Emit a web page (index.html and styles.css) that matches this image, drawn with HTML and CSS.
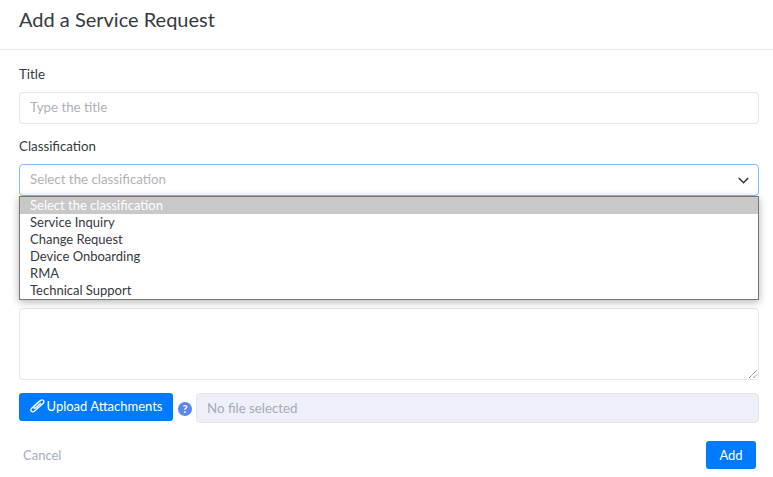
FILE: index.html
```html
<!DOCTYPE html>
<html lang="en">
<head>
<meta charset="utf-8">
<title>Add a Service Request</title>
<link rel="stylesheet" href="styles.css">
</head>
<body>
<div class="modal">
  <header class="modal-header"><h1 class="modal-title">Add a Service Request</h1></header>
  <form class="modal-body">
    <div class="field">
      <label class="label">Title</label>
      <div class="control placeholder"><span class="control-text">Type the title</span></div>
    </div>
    <div class="field select-field">
      <label class="label">Classification</label>
      <div class="control control-focus placeholder">
        <span class="control-text">Select the classification</span>
        <svg class="chevron" width="11" height="7" viewBox="0 0 11 7"><path d="M0.8 1 L5.5 5.7 L10.2 1" fill="none" stroke="#343a40" stroke-width="1.6"/></svg>
      </div>
      <ul class="dropdown">
        <li class="option option-active">Select the classification</li>
        <li class="option">Service Inquiry</li>
        <li class="option">Change Request</li>
        <li class="option">Device Onboarding</li>
        <li class="option">RMA</li>
        <li class="option">Technical Support</li>
      </ul>
    </div>
    <div class="field">
      <div class="control textarea">
        <svg class="grip" width="10" height="10" viewBox="0 0 10 10"><path d="M1 9 L9 1 M5.5 9 L9 5.5" stroke="#666" stroke-width="1" fill="none" stroke-dasharray="1.2 0.6"/></svg>
      </div>
    </div>
    <div class="upload-row">
      <button type="button" class="btn btn-upload">
        <svg class="clip" width="15" height="14" viewBox="0 0 15 14"><path d="M9.6 1.9 L1.9 8.9 C0.6 10.1 0.5 11.4 1.4 12.3 C2.3 13.2 3.6 13 4.9 11.8 L13 4.4 C14.1 3.4 14.2 2.2 13.4 1.4 C12.6 0.6 11.4 0.7 10.3 1.7 L4.2 7.3 C3.6 7.9 3.5 8.5 4 9 C4.5 9.5 5.1 9.3 5.7 8.8 L10.5 4.4" fill="none" stroke="#fff" stroke-width="1.3" stroke-linecap="round"/></svg>Upload Attachments</button>
      <span class="help">?</span>
      <div class="file-name">No file selected</div>
    </div>
    <div class="actions">
      <a class="cancel">Cancel</a>
      <button type="button" class="btn btn-add">Add</button>
    </div>
  </form>
</div>
</body>
</html>
```
FILE: styles.css
```css
* { box-sizing: border-box; }
html, body { margin: 0; padding: 0; background: #fff; }
body { font-family: Lato, "Liberation Sans", sans-serif; font-size: 13.3px; color: #343a40; height: 477px; overflow: hidden; }
.modal-header { height: 50px; border-bottom: 1px solid #e2e5ec; padding: 7px 19px 0; }
.modal-title { margin: 0; font-size: 20px; font-weight: 400; line-height: 24px; color: #343a40; }
.modal-body { padding: 14px 14px 0 19px; }
.field { margin-bottom: 12px; }
.label { display: block; line-height: 20px; margin-bottom: 8px; color: #343a40; }
.select-field { position: relative; margin-bottom: 112px; }
.control { height: 32px; border: 1px solid #e2e5ec; border-radius: 4px; padding: 0 10px; display: flex; align-items: center; justify-content: space-between; background: #fff; }
.control-text { padding-bottom: 2px; }
.placeholder { color: #adb1b8; }
.control-focus { border-color: #80bdff; }
.chevron { margin-right: -1px; }
.textarea { height: 72px; position: relative; }
.grip { position: absolute; right: 0; bottom: 0; }
.dropdown { position: absolute; left: 0; right: 0; top: 60px; margin: 0; padding: 0; list-style: none; background: #fff; border: 1px solid #767676; box-shadow: 0 2px 8px rgba(0, 0, 0, .3); z-index: 2; font-size: 13px; }
.option { height: 17px; line-height: 16px; padding-left: 10px; color: #343a40; }
.option-active { background: #c8c8c8; color: #fff; }
.upload-row { display: flex; align-items: flex-start; margin-top: 13px; }
.btn { border: 0; border-radius: 3px; background: #007bff; color: #fff; font: inherit; font-size: 13px; height: 28px; padding: 0; }
.btn-upload { width: 154px; display: flex; align-items: center; justify-content: center; gap: 2px; padding-bottom: 2px; }
.clip { flex: none; }
.help { width: 14px; height: 14px; border-radius: 50%; background: #5a86f0; color: #fff; font-size: 11px; font-weight: 700; line-height: 14px; text-align: center; margin: 9px 4px 0 5px; }
.file-name { flex: 1; height: 30px; border: 1px solid #e2e5ec; border-radius: 4px; background: #edf0f8; color: #a7abb3; padding: 0 10px; line-height: 28px; }
.actions { display: flex; justify-content: space-between; align-items: center; margin-top: 18px; padding: 0 3px 0 4px; }
.cancel { color: #a7abc3; font-size: 13px; }
.btn-add { width: 50px; }
```
